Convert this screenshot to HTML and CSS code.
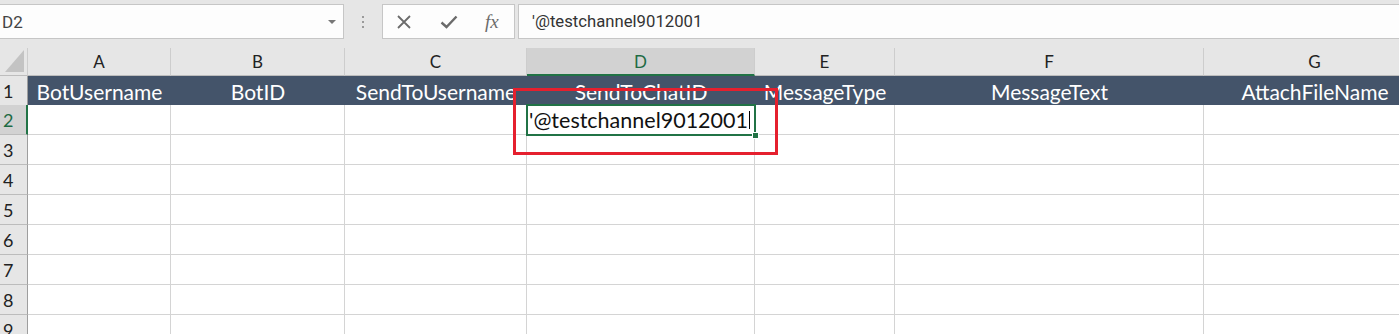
FILE: index.html
```html
<!DOCTYPE html>
<html lang="en">
<head>
    <meta charset="UTF-8">
    <title>Sheet1 - Excel</title>
    <link rel="stylesheet" href="styles.css">
</head>
<body>
    <div class="formula-bar">
        <div class="name-box">
            <span class="name-text">D2</span>
            <span class="name-caret"></span>
        </div>
        <div class="grip">
            <span></span><span></span><span></span>
        </div>
        <div class="fx-buttons">
            <svg class="fx-icon" width="16" height="14" viewBox="0 0 16 14">
                <path d="M2 1 L14 13 M14 1 L2 13" stroke="#6b6b6b" stroke-width="1.8" fill="none"/>
            </svg>
            <svg class="fx-icon" width="18" height="14" viewBox="0 0 18 14">
                <path d="M1.5 7.5 L6.5 12 L16.5 1.5" stroke="#6b6b6b" stroke-width="2.4" fill="none"/>
            </svg>
            <span class="fx-label">fx</span>
        </div>
        <div class="formula-input">'@testchannel9012001</div>
    </div>

    <div class="sheet">
        <div class="row col-heads">
            <div class="corner"><span class="corner-tri"></span></div>
            <div class="col-head">A</div>
            <div class="col-head">B</div>
            <div class="col-head">C</div>
            <div class="col-head active">D</div>
            <div class="col-head">E</div>
            <div class="col-head">F</div>
            <div class="col-head">G</div>
        </div>
        <div class="row title-row">
            <div class="row-head">1</div>
            <div class="title">BotUsername</div>
            <div class="title">BotID</div>
            <div class="title">SendToUsername</div>
            <div class="title">SendToChatID</div>
            <div class="title">MessageType</div>
            <div class="title">MessageText</div>
            <div class="title">AttachFileName</div>
        </div>
        <div class="row">
            <div class="row-head active">2</div>
            <div class="cell"></div>
            <div class="cell"></div>
            <div class="cell"></div>
            <div class="cell selected">'@testchannel9012001<span class="text-cursor"></span><span class="fill-handle"></span></div>
            <div class="cell"></div>
            <div class="cell"></div>
            <div class="cell"></div>
        </div>
        <div class="row">
            <div class="row-head">3</div>
            <div class="cell"></div><div class="cell"></div><div class="cell"></div><div class="cell"></div>
            <div class="cell"></div><div class="cell"></div><div class="cell"></div>
        </div>
        <div class="row">
            <div class="row-head">4</div>
            <div class="cell"></div><div class="cell"></div><div class="cell"></div><div class="cell"></div>
            <div class="cell"></div><div class="cell"></div><div class="cell"></div>
        </div>
        <div class="row">
            <div class="row-head">5</div>
            <div class="cell"></div><div class="cell"></div><div class="cell"></div><div class="cell"></div>
            <div class="cell"></div><div class="cell"></div><div class="cell"></div>
        </div>
        <div class="row">
            <div class="row-head">6</div>
            <div class="cell"></div><div class="cell"></div><div class="cell"></div><div class="cell"></div>
            <div class="cell"></div><div class="cell"></div><div class="cell"></div>
        </div>
        <div class="row">
            <div class="row-head">7</div>
            <div class="cell"></div><div class="cell"></div><div class="cell"></div><div class="cell"></div>
            <div class="cell"></div><div class="cell"></div><div class="cell"></div>
        </div>
        <div class="row">
            <div class="row-head">8</div>
            <div class="cell"></div><div class="cell"></div><div class="cell"></div><div class="cell"></div>
            <div class="cell"></div><div class="cell"></div><div class="cell"></div>
        </div>
        <div class="row">
            <div class="row-head">9</div>
            <div class="cell"></div><div class="cell"></div><div class="cell"></div><div class="cell"></div>
            <div class="cell"></div><div class="cell"></div><div class="cell"></div>
        </div>

        <div class="red-box"></div>
    </div>
</body>
</html>
```

FILE: styles.css
```css
body {
    margin: 0;
    padding: 0;
    width: 1399px;
    height: 334px;
    overflow: hidden;
    background: #e6e6e6;
    font-family: 'Lato', 'Open Sans', sans-serif;
}

/* formula bar */

.formula-bar {
    display: flex;
    align-items: stretch;
    height: 48px;
    padding-top: 4px;
    padding-bottom: 9px;
    box-sizing: border-box;
}

.name-box {
    width: 345px;
    margin-left: -1px;
    background: #fdfdfd;
    border: 1px solid #c6c6c6;
    box-sizing: border-box;
    display: flex;
    align-items: center;
    justify-content: space-between;
    padding: 0 7px 0 2px;
}

.name-text {
    font-family: 'Roboto', sans-serif;
    font-size: 17px;
    color: #444;
}

.name-caret {
    width: 0;
    height: 0;
    border-left: 4px solid transparent;
    border-right: 4px solid transparent;
    border-top: 4px solid #777;
}

.grip {
    width: 38px;
    display: flex;
    flex-direction: column;
    align-items: center;
    justify-content: center;
    gap: 3px;
}

.grip span {
    width: 2px;
    height: 2px;
    background: #9a9a9a;
}

.fx-buttons {
    width: 133px;
    background: #fdfdfd;
    border: 1px solid #c6c6c6;
    box-sizing: border-box;
    display: flex;
    align-items: center;
    padding-left: 13px;
    gap: 28px;
}

.fx-label {
    font-family: 'Liberation Serif', serif;
    font-style: italic;
    font-size: 19px;
    color: #6b6b6b;
    margin-left: -1px;
}

.formula-input {
    flex: 1;
    margin-left: 3px;
    margin-right: -1px;
    background: #fdfdfd;
    border: 1px solid #c6c6c6;
    box-sizing: border-box;
    display: flex;
    align-items: center;
    padding-left: 13px;
    font-family: 'Roboto', sans-serif;
    font-size: 16.7px;
    color: #333;
}

/* grid */

.sheet {
    position: relative;
}

.row {
    display: grid;
    grid-template-columns: 28px 143px 174px 182px 228px 140px 309px 222px;
    height: 30px;
}

.col-heads {
    height: 28px;
}

.title-row {
    height: 29px;
}

.corner {
    position: relative;
    background: #e6e6e6;
    border-right: 1px solid #cdcdcd;
    border-bottom: 1px solid #bdbdbd;
}

.corner-tri {
    position: absolute;
    right: 3px;
    bottom: 3px;
    width: 0;
    height: 0;
    border-left: 19px solid transparent;
    border-bottom: 22px solid #c3c3c3;
}

.col-head {
    background: #e6e6e6;
    border-right: 1px solid #cdcdcd;
    border-bottom: 1px solid #bdbdbd;
    display: flex;
    align-items: center;
    justify-content: center;
    font-size: 17px;
    color: #222;
    box-sizing: border-box;
}

.col-head.active {
    background: #d2d2d2;
    color: #1e6b44;
    border-bottom: 2px solid #217346;
}

.row-head {
    background: #e6e6e6;
    border-right: 1px solid #9e9e9e;
    border-bottom: 1px solid #bcbcbc;
    display: flex;
    align-items: center;
    padding-left: 3px;
    font-size: 18px;
    color: #222;
    box-sizing: border-box;
}

.row-head.active {
    background: #d2d2d2;
    color: #1e6b44;
    border-right: 2px solid #217346;
}

.title-row .row-head {
    border-bottom: none;
}

.title {
    background: #44546a;
    color: #fff;
    font-size: 21px;
    padding-top: 2px;
    display: flex;
    align-items: center;
    justify-content: center;
    white-space: nowrap;
}

.cell {
    background: #fff;
    border-right: 1px solid #d4d4d4;
    border-bottom: 1px solid #d4d4d4;
    box-sizing: border-box;
}

.selected {
    position: relative;
    display: flex;
    align-items: center;
    padding-left: 2px;
    font-size: 21.5px;
    color: #111;
    white-space: nowrap;
}

.selected::after {
    content: '';
    position: absolute;
    top: -1px;
    left: -1px;
    right: -2px;
    bottom: -2px;
    border: 2px solid #217346;
}

.text-cursor {
    width: 1px;
    height: 18px;
    background: #000;
    margin-left: 1px;
}

.fill-handle {
    position: absolute;
    right: -5px;
    bottom: -5px;
    width: 5px;
    height: 5px;
    background: #217346;
    border: 1px solid #fff;
    z-index: 2;
}

.red-box {
    position: absolute;
    left: 513px;
    top: 40px;
    width: 265px;
    height: 67px;
    border: 3px solid #e5202e;
    box-sizing: border-box;
}
```
